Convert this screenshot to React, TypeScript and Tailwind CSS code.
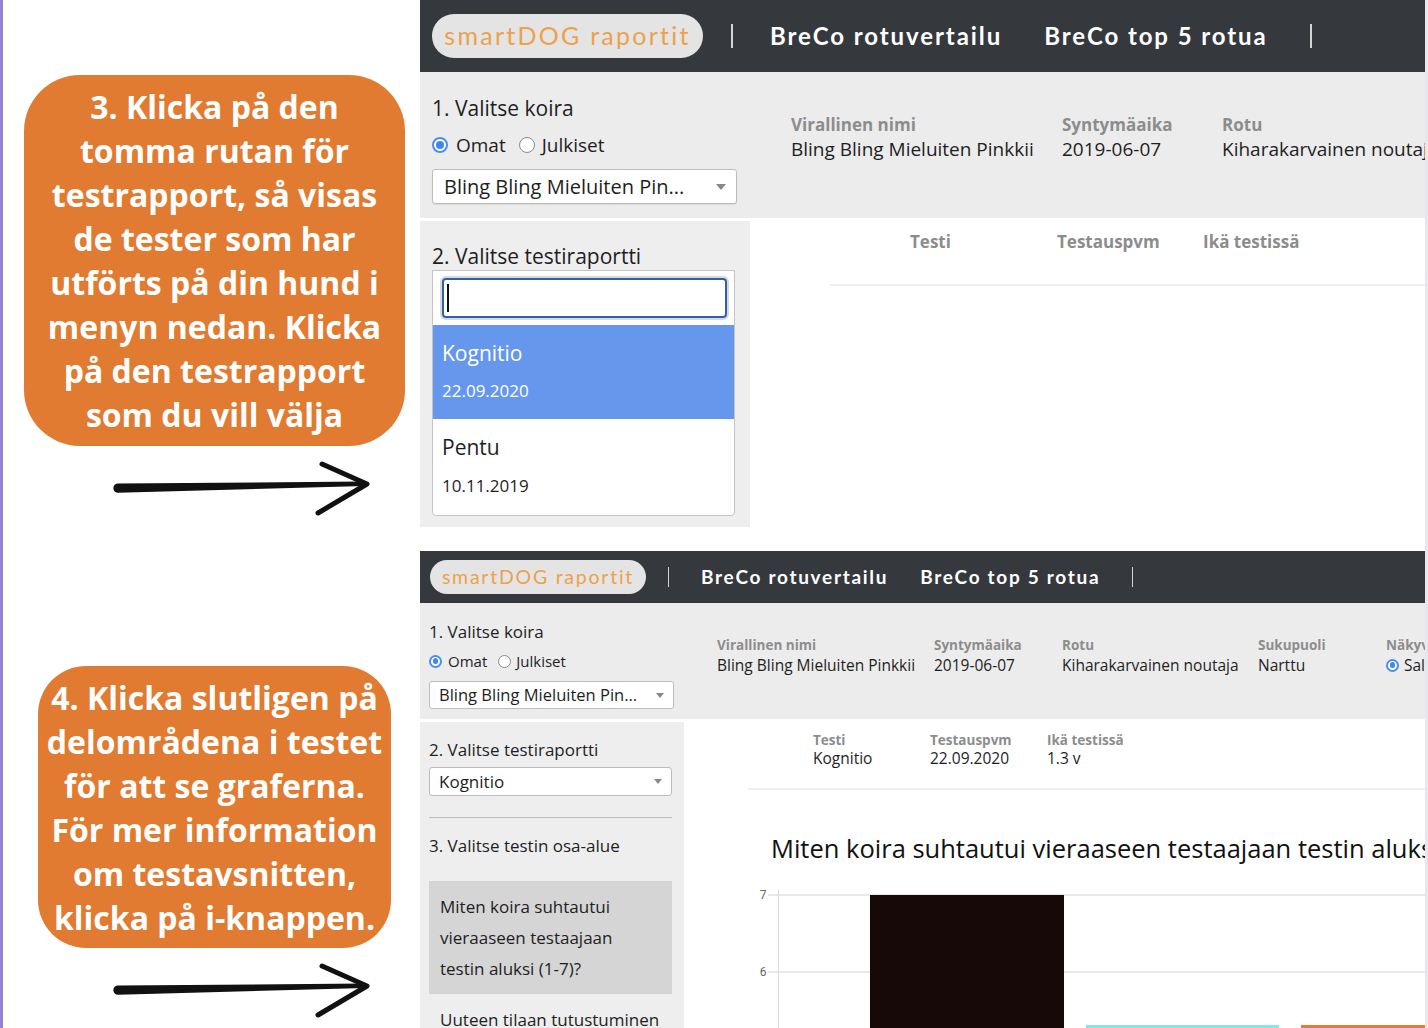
import type { ReactNode } from "react";

// Hand-drawn arrow that points from the note to the screenshot
function Arrow() {
  return (
    <svg width="262" height="60" viewBox="0 0 262 60" className="ml-[107px] mt-[11px] block">
      <path d="M8 26.5 L254 24.6 L255 29 L8 35.8 A4.6 4.6 0 0 1 8 26.5 Z" fill="#111" />
      <polyline
        points="212,7 257,27 208,56"
        fill="none"
        stroke="#111"
        strokeWidth="5"
        strokeLinecap="round"
        strokeLinejoin="round"
      />
    </svg>
  );
}

function Bubble({ lines, className }: { lines: string[]; className: string }) {
  return (
    <div
      className={`bg-[#e07b31] text-center font-['Open_Sans',sans-serif] text-[32px] font-bold leading-[44px] text-white ${className}`}
    >
      {lines.map((line) => (
        <div key={line} className="whitespace-nowrap">
          {line}
        </div>
      ))}
    </div>
  );
}

function Radio({ on, className }: { on?: boolean; className: string }) {
  if (on) {
    return (
      <span className={`flex items-center justify-center rounded-full border-2 border-[#4b8df0] bg-white ${className}`}>
        <span className="h-[60%] w-[60%] rounded-full bg-[#3f86f2]" />
      </span>
    );
  }
  return <span className={`rounded-full border border-[#8a8a8a] bg-white ${className}`} />;
}

function Caret({ className }: { className: string }) {
  return (
    <svg viewBox="0 0 10 6" className={className}>
      <path d="M0 0 L10 0 L5 6 Z" fill="#888" />
    </svg>
  );
}

function Field({ label, value, className, big }: { label: string; value: ReactNode; className: string; big?: boolean }) {
  return (
    <div className={`shrink-0 whitespace-nowrap ${className}`}>
      <div
        className={
          big
            ? "text-[17px] font-bold leading-[24px] text-[#8c8c8c]"
            : "text-[13.5px] font-bold leading-[19px] text-[#8c8c8c]"
        }
      >
        {label}
      </div>
      <div className={big ? "text-[19px] leading-[24px]" : "text-[15.5px] leading-[20px]"}>{value}</div>
    </div>
  );
}

function TopShot() {
  return (
    <div className="flex h-[527px] shrink-0 flex-col overflow-hidden font-['Open_Sans',sans-serif] text-[#1e1e1e]">
      <nav className="flex h-[72px] shrink-0 items-center bg-[#35383d] font-['Lato',sans-serif]">
        <div className="ml-[12px] flex h-[44px] w-[271px] items-center justify-center rounded-full bg-[#e4e4e4] text-[25px] tracking-[0.09em] text-[#eda14b]">
          smartDOG raportit
        </div>
        <span className="ml-[28px] h-[24px] w-[2px] bg-[#d4d4d4]" />
        <span className="ml-[37px] text-[24px] font-bold tracking-[0.08em] text-white">BreCo rotuvertailu</span>
        <span className="ml-[42px] text-[24px] font-bold tracking-[0.08em] text-white">BreCo top 5 rotua</span>
        <span className="ml-[42px] h-[24px] w-[2px] bg-[#d4d4d4]" />
      </nav>

      <div className="flex h-[146px] shrink-0 bg-[#ececec]">
        <div className="ml-[12px] w-[305px] shrink-0">
          <div className="mt-[22px] text-[21px] leading-[28px]">1. Valitse koira</div>
          <div className="mt-[10px] flex h-[26px] items-center text-[19px]">
            <Radio on className="h-[16px] w-[16px]" />
            <span className="ml-[8px]">Omat</span>
            <Radio className="ml-[13px] h-[16px] w-[16px]" />
            <span className="ml-[7px]">Julkiset</span>
          </div>
          <div className="mt-[11px] flex h-[35px] items-center justify-between rounded-[3px] border border-[#bdbdbd] bg-white pl-[11px] pr-[10px] text-[20px] shadow-[0_1px_1px_rgba(0,0,0,0.08)]">
            <span className="whitespace-nowrap">Bling Bling Mieluiten Pin...</span>
            <Caret className="h-[6px] w-[10px]" />
          </div>
        </div>
        <div className="ml-[54px] mt-[41px] flex">
          <Field big className="w-[271px]" label="Virallinen nimi" value="Bling Bling Mieluiten Pinkkii" />
          <Field big className="w-[160px]" label="Syntymäaika" value="2019-06-07" />
          <Field big className="w-[260px]" label="Rotu" value="Kiharakarvainen noutaja" />
        </div>
      </div>

      <div className="mt-[3px] flex h-[306px] shrink-0">
        <aside className="w-[330px] shrink-0 bg-[#eeeeee] pl-[12px] pt-[21px]">
          <div className="text-[21px] leading-[28px]">2. Valitse testiraportti</div>
          <div className="h-[246px] w-[303px] overflow-hidden rounded-b-[4px] border border-[#c4c4c4] bg-white">
            <div className="ml-[9px] mt-[7px] flex h-[40px] w-[285px] items-center rounded-[4px] border-2 border-[#2f5fae] pl-[3px] shadow-[0_0_0_2px_#d8d8d8]">
              <span className="h-[28px] w-[2px] bg-[#111]" />
            </div>
            <div className="mt-[7px] h-[94px] bg-[#6597ed] pl-[9px] pt-[14px] text-white">
              <div className="text-[21px] leading-[28px]">Kognitio</div>
              <div className="mt-[12px] text-[17px] leading-[24px]">22.09.2020</div>
            </div>
            <div className="h-[96px] pl-[9px] pt-[14px]">
              <div className="text-[21px] leading-[28px]">Pentu</div>
              <div className="mt-[13px] text-[17px] leading-[24px]">10.11.2019</div>
            </div>
          </div>
        </aside>
        <div className="flex-1 bg-white">
          <div className="ml-[160px] mt-[9px] flex text-[17px] font-bold leading-[24px] text-[#8c8c8c]">
            <span className="w-[147px]">Testi</span>
            <span className="w-[146px]">Testauspvm</span>
            <span>Ikä testissä</span>
          </div>
          <div className="ml-[80px] mt-[30px] h-[2px] bg-[#efefef]" />
        </div>
      </div>
    </div>
  );
}

function Chart() {
  return (
    <svg width="675" height="162" viewBox="0 0 675 162" className="ml-[66px] block shrink-0">
      <line x1="18" y1="29" x2="675" y2="29" stroke="#e8e8e8" strokeWidth="2" />
      <line x1="18" y1="106" x2="675" y2="106" stroke="#e8e8e8" strokeWidth="2" />
      <line x1="28.5" y1="24" x2="28.5" y2="162" stroke="#dcdcdc" strokeWidth="1" />
      <text x="13" y="33" textAnchor="middle" fontSize="12" fill="#666" fontFamily="Roboto, sans-serif">
        7
      </text>
      <text x="13" y="110" textAnchor="middle" fontSize="12" fill="#666" fontFamily="Roboto, sans-serif">
        6
      </text>
      <rect x="120" y="29" width="194" height="133" fill="#180909" />
      <rect x="336" y="159" width="193" height="3" fill="#7eeae6" />
      <rect x="551" y="159" width="124" height="3" fill="#e07d3a" />
    </svg>
  );
}

function BottomShot() {
  return (
    <div className="mt-[24px] flex flex-1 flex-col overflow-hidden font-['Open_Sans',sans-serif] text-[#1e1e1e]">
      <nav className="flex h-[52px] shrink-0 items-center bg-[#35383d] font-['Lato',sans-serif]">
        <div className="ml-[10px] flex h-[34px] w-[216px] items-center justify-center rounded-full bg-[#e4e4e4] text-[19.5px] tracking-[0.09em] text-[#eda14b]">
          smartDOG raportit
        </div>
        <span className="ml-[22px] h-[20px] w-[1px] bg-[#d4d4d4]" />
        <span className="ml-[32px] text-[19px] font-bold tracking-[0.09em] text-white">BreCo rotuvertailu</span>
        <span className="ml-[32px] text-[19px] font-bold tracking-[0.09em] text-white">BreCo top 5 rotua</span>
        <span className="ml-[32px] h-[20px] w-[1px] bg-[#d4d4d4]" />
      </nav>

      <div className="flex h-[116px] shrink-0 bg-[#ececec]">
        <div className="ml-[9px] w-[245px] shrink-0">
          <div className="mt-[17px] text-[17px] leading-[24px]">1. Valitse koira</div>
          <div className="mt-[7px] flex h-[20px] items-center text-[15px]">
            <Radio on className="h-[13px] w-[13px]" />
            <span className="ml-[6px]">Omat</span>
            <Radio className="ml-[11px] h-[13px] w-[13px]" />
            <span className="ml-[5px]">Julkiset</span>
          </div>
          <div className="mt-[10px] flex h-[28px] items-center justify-between rounded-[3px] border border-[#bdbdbd] bg-white pl-[9px] pr-[9px] text-[16.5px]">
            <span className="whitespace-nowrap">Bling Bling Mieluiten Pin...</span>
            <Caret className="h-[5px] w-[8px]" />
          </div>
        </div>
        <div className="ml-[43px] mt-[33px] flex">
          <Field className="w-[217px]" label="Virallinen nimi" value="Bling Bling Mieluiten Pinkkii" />
          <Field className="w-[128px]" label="Syntymäaika" value="2019-06-07" />
          <Field className="w-[196px]" label="Rotu" value="Kiharakarvainen noutaja" />
          <Field className="w-[128px]" label="Sukupuoli" value="Narttu" />
          <Field
            className="w-[80px]"
            label="Näkyvyys"
            value={
              <span className="flex items-center">
                <Radio on className="h-[13px] w-[13px]" />
                <span className="ml-[5px]">Salainen</span>
              </span>
            }
          />
        </div>
      </div>

      <div className="mt-[3px] flex flex-1">
        <aside className="w-[264px] shrink-0 bg-[#eeeeee] pl-[9px] pt-[16px] text-[17px]">
          <div className="leading-[24px]">2. Valitse testiraportti</div>
          <div className="mt-[5px] flex h-[29px] w-[243px] items-center justify-between rounded-[3px] border border-[#bdbdbd] bg-white pl-[9px] pr-[9px]">
            <span>Kognitio</span>
            <Caret className="h-[5px] w-[8px]" />
          </div>
          <div className="mt-[21px] h-px w-[243px] bg-[#bdbdbd]" />
          <div className="mt-[16px] leading-[24px]">3. Valitse testin osa-alue</div>
          <div className="mt-[23px] w-[243px] bg-[#d5d5d5] py-[10px] pl-[11px] leading-[31px]">
            Miten koira suhtautui
            <br />
            vieraaseen testaajaan
            <br />
            testin aluksi (1-7)?
          </div>
          <div className="mt-[10px] pl-[11px] leading-[31px]">Uuteen tilaan tutustuminen</div>
        </aside>
        <div className="flex min-w-0 flex-1 flex-col bg-white">
          <div className="ml-[129px] mt-[9px] flex whitespace-nowrap">
            <div className="w-[117px]">
              <div className="text-[13.5px] font-bold leading-[18px] text-[#8c8c8c]">Testi</div>
              <div className="text-[15.5px] leading-[18px]">Kognitio</div>
            </div>
            <div className="w-[117px]">
              <div className="text-[13.5px] font-bold leading-[18px] text-[#8c8c8c]">Testauspvm</div>
              <div className="text-[15.5px] leading-[18px]">22.09.2020</div>
            </div>
            <div>
              <div className="text-[13.5px] font-bold leading-[18px] text-[#8c8c8c]">Ikä testissä</div>
              <div className="text-[15.5px] leading-[18px]">1.3 v</div>
            </div>
          </div>
          <div className="ml-[64px] mt-[21px] h-[2px] shrink-0 bg-[#efefef]" />
          <div className="ml-[87px] mt-[40px] whitespace-nowrap text-[25.5px] leading-[36px] text-[#111]">
            Miten koira suhtautui vieraaseen testaajaan testin aluksi (1-7)?
          </div>
          <Chart />
        </div>
      </div>
    </div>
  );
}

export default function App() {
  return (
    <div className="flex h-[1028px] w-[1428px] overflow-hidden bg-white">
      <div className="w-[420px] shrink-0 border-l-[3px] border-[#9a7fd6]">
        <Bubble
          className="ml-[21px] mt-[75px] w-[381px] rounded-[56px] pb-[9px] pt-[10px]"
          lines={[
            "3. Klicka på den",
            "tomma rutan för",
            "testrapport, så visas",
            "de tester som har",
            "utförts på din hund i",
            "menyn nedan. Klicka",
            "på den testrapport",
            "som du vill välja",
          ]}
        />
        <Arrow />
        <Bubble
          className="ml-[35px] mt-[149px] w-[353px] rounded-[48px] pb-[8px] pt-[10px]"
          lines={[
            "4. Klicka slutligen på",
            "delområdena i testet",
            "för att se graferna.",
            "För mer information",
            "om testavsnitten,",
            "klicka på i-knappen.",
          ]}
        />
        <Arrow />
      </div>
      <div className="flex w-[1005px] shrink-0 flex-col">
        <TopShot />
        <BottomShot />
      </div>
      <div className="w-[3px] shrink-0 bg-[#e8e7ee]" />
    </div>
  );
}
